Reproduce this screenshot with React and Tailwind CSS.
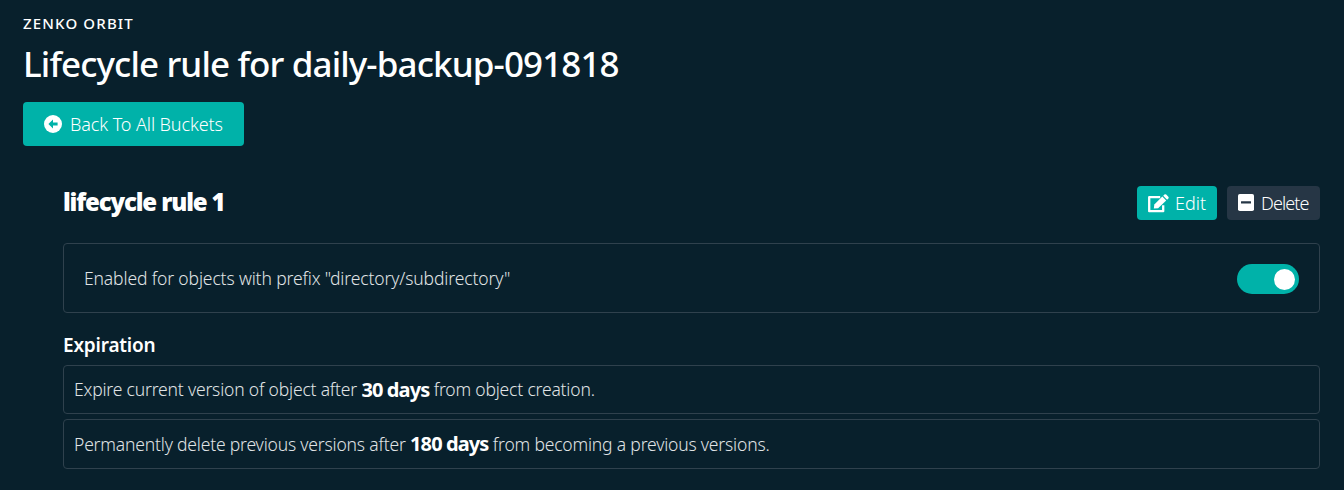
function BackIcon() {
  return (
    <svg viewBox="0 0 18 18" className="size-[18px]" aria-hidden="true">
      <circle cx="9" cy="9" r="9" fill="white" />
      <path d="M4.4 9 L9 4.6 V7.6 H13.6 V10.4 H9 V13.4 Z" fill="#00b2a9" />
    </svg>
  );
}

function EditIcon() {
  return (
    <svg viewBox="0 0 21 19" className="h-[19px] w-[21px]" fill="none" aria-hidden="true">
      <path d="M12.2 3.2H1.2V17.2H15.2V11.2" stroke="white" strokeWidth="2.3" strokeLinejoin="round" />
      <path d="M14.3 2.6L18.2 6.5L10.1 14.2L5.8 14.6L6.3 10.5Z" fill="white" />
      <path d="M15.2 1.8L16.4.6Q17.3-.2 18.2.6L20.3 2.7Q21.1 3.6 20.3 4.5L19.1 5.7Z" fill="white" />
    </svg>
  );
}

function DeleteIcon() {
  return (
    <svg viewBox="0 0 16 17" className="mb-px h-[17px] w-4" aria-hidden="true">
      <rect width="16" height="17" rx="1.8" fill="white" />
      <rect x="3" y="7.2" width="10" height="2.4" rx="0.4" fill="#263645" />
    </svg>
  );
}

function ActionButton({ icon, label, className }) {
  return (
    <button type="button" className={`flex h-[34px] items-center rounded-[4px] text-[18px] font-light text-white ${className}`}>
      {icon}
      <span className="whitespace-nowrap">{label}</span>
    </button>
  );
}

function Rule({ before, days, after, className }) {
  return (
    <div className={`flex items-center whitespace-pre rounded-[4px] border border-[#2f414d] px-[10px] text-[17.5px] font-light tracking-[-0.18px] text-[#e0e4e6] ${className}`}>
      <span>{before} </span>
      <strong className="text-[20px] font-bold tracking-[-0.9px] text-white">{days}</strong>
      <span> {after}</span>
    </div>
  );
}

export default function App() {
  return (
    <main className="flex h-[490px] w-full flex-col bg-[#08202c] pl-[23px] pr-6 pt-[13px] font-['Noto_Sans',sans-serif] text-white">
      <div className="h-[31px] text-[15px] font-medium leading-5 tracking-[1.15px]">ZENKO ORBIT</div>
      <h1 className="h-[58px] whitespace-nowrap text-[35px] font-medium leading-[40px] tracking-[-0.88px]">Lifecycle rule for daily-backup-091818</h1>
      <button type="button" className="flex h-[44px] w-[221px] items-center gap-2 rounded-[4px] bg-[#00b2a9] pl-[21px] text-[18px] font-light">
        <BackIcon />
        <span className="whitespace-nowrap tracking-[-0.1px]">Back To All Buckets</span>
      </button>

      <section className="ml-10 mt-10 flex flex-col">
        <header className="flex h-[34px] items-center justify-between">
          <h2 className="whitespace-nowrap pb-[3px] text-[24px] font-black leading-[30px] tracking-[-1.15px]">lifecycle rule 1</h2>
          <div className="flex gap-[10px]">
            <ActionButton className="w-20 gap-[6px] bg-[#00b2a9] pl-[11px]" icon={<EditIcon />} label="Edit" />
            <ActionButton className="w-[93px] gap-[7px] bg-[#263645] pl-[11px] tracking-[-0.9px]" icon={<DeleteIcon />} label="Delete" />
          </div>
        </header>

        <div className="mt-[23px] flex h-[70px] items-center justify-between rounded-[4px] border border-[#2f414d] px-5">
          <span className="whitespace-nowrap text-[17.5px] font-light tracking-[-0.13px] text-[#e0e4e6]">Enabled for objects with prefix "directory/subdirectory"</span>
          <button type="button" role="switch" aria-checked="true" className="mt-[2px] flex h-[30px] w-[62px] items-center justify-end rounded-full bg-[#00b2a9] pr-1">
            <span className="size-[21px] rounded-full bg-white" />
          </button>
        </div>

        <h3 className="mt-5 h-8 text-[19px] font-semibold leading-6 tracking-[-0.2px]">Expiration</h3>
        <Rule className="h-[49px]" before="Expire current version of object after" days="30 days" after="from object creation." />
        <Rule className="mt-[5px] h-[50px]" before="Permanently delete previous versions after" days="180 days" after="from becoming a previous versions." />
      </section>
    </main>
  );
}
